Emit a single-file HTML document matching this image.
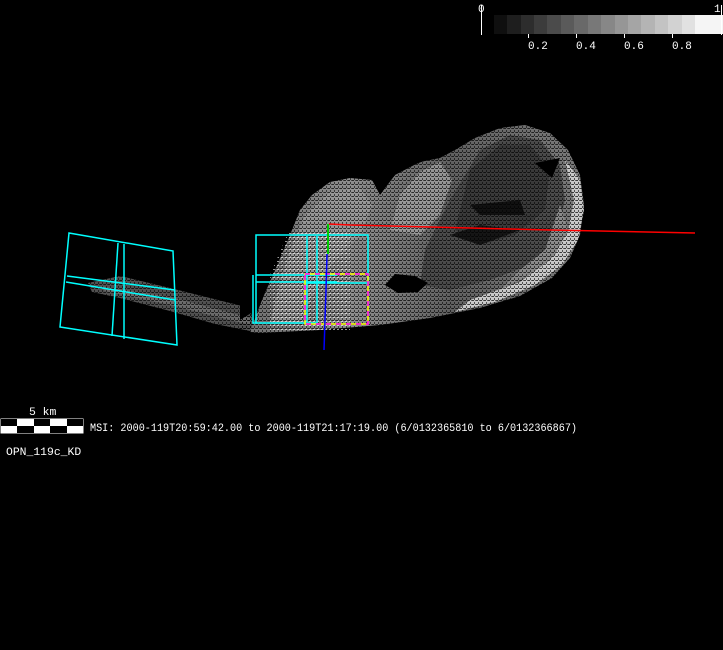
<!DOCTYPE html>
<html><head><meta charset="utf-8"><style>
html,body{margin:0;padding:0;background:#000;width:723px;height:650px;overflow:hidden}
svg{display:block}
text{font-family:"Liberation Mono",monospace;fill:#fff}
</style></head><body>
<svg width="723" height="650" viewBox="0 0 723 650" xmlns="http://www.w3.org/2000/svg">
<defs>
<pattern id="dots" width="4" height="4" patternUnits="userSpaceOnUse">
<rect x="0" y="0" width="2" height="1" fill="#000" opacity="0.7"/><rect x="2" y="2" width="1" height="2" fill="#000" opacity="0.6"/><rect x="3" y="0" width="1" height="1" fill="#000" opacity="0.5"/>
</pattern>
<pattern id="wdots" width="4" height="4" patternUnits="userSpaceOnUse">
<rect x="1" y="1" width="2" height="1" fill="#fff" opacity="0.6"/>
</pattern>
<linearGradient id="lg" x1="0" y1="0" x2="1" y2="0">
<stop offset="0" stop-color="#707070"/><stop offset="0.3" stop-color="#8e8e8e"/><stop offset="0.6" stop-color="#606060"/><stop offset="1" stop-color="#7a7a7a"/>
</linearGradient>
</defs>
<!-- tail -->
<polygon points="88,283 120,276 170,288 210,298 250,308 255,332 215,324 170,311 120,298 92,292" fill="#505050"/>
<polygon points="100,286 170,297 250,318 250,325 170,305 105,291" fill="#6a6a6a"/>
<rect x="85" y="270" width="170" height="65" fill="url(#dots)"/>
<!-- main body -->
<polygon points="250,332 262,300 275,270 288,240 300,210 312,195 330,182 350,178 372,180 380,195 395,175 420,162 440,158 455,150 475,138 500,128 525,125 550,133 568,150 580,175 584,205 580,235 570,258 552,278 520,296 480,308 430,318 380,325 320,330 260,333" fill="url(#lg)"/>
<polygon points="275,300 290,250 305,215 330,192 360,188 372,205 360,235 335,260 310,300 300,325 270,325" fill="#9a9a9a" opacity="0.8"/>
<polygon points="390,230 400,195 420,172 440,162 452,180 440,215 420,235" fill="#a0a0a0" opacity="0.8"/>
<polygon points="450,200 480,150 510,135 540,140 560,165 565,200 555,240 530,265 490,280 450,290 420,285 425,250" fill="#4a4a4a"/>
<polygon points="470,170 500,145 530,145 550,170 545,210 515,235 480,245 455,230" fill="#353535" opacity="0.8"/>
<polygon points="565,160 580,180 584,210 578,240 562,265 535,285 495,302 455,312 470,300 520,282 550,260 568,232 574,200" fill="#c8c8c8"/>
<polygon points="560,205 568,230 555,255 530,275 500,290 520,270 545,250" fill="#8a8a8a"/>
<polygon points="385,285 395,274 415,276 428,283 418,292 398,293" fill="#000"/>
<polygon points="535,163 560,158 552,178" fill="#000"/>
<polygon points="470,205 520,200 525,215 480,215" fill="#111"/>
<polygon points="450,235 480,225 520,230 480,245" fill="#151515"/>
<rect x="240" y="120" width="350" height="215" fill="url(#dots)"/>
<rect x="270" y="230" width="80" height="100" fill="url(#wdots)"/>
<polygon points="240,120 590,120 590,128 525,122 470,136 440,155 400,170 380,180 360,176 320,180 300,205 285,240 270,275 256,310 240,320" fill="#000"/>
<polyline points="329,224 350,225 390,226 430,227 470,228 510,229 550,230 600,231 695,233" fill="none" stroke="#f00" stroke-width="1.5"/>
<g stroke="#0ff" stroke-width="1.5" fill="none">
<polygon points="69,233 173,251 177,345 60,327"/>
<polyline points="67,276 175,290"/>
<polyline points="66,282 175,300"/>
<polyline points="118,243 112,336"/>
<polyline points="124,244 124,339"/>
<polyline points="256,323 256,235 368,235 368,283"/>
<polyline points="253,275 253,323 318,323"/>
<polyline points="256,275 337,275"/>
<polyline points="256,282 337,282"/>
<polyline points="307,236 307,322"/>
<polyline points="317,236 317,322"/>
<polyline points="304,283 368,283"/>
</g>
<rect x="305" y="274" width="63" height="50" fill="none" stroke="#ff0" stroke-width="1.5"/>
<rect x="305" y="274" width="63" height="50" fill="none" stroke="#f0f" stroke-width="1.5" stroke-dasharray="5 5"/>
<line x1="328" y1="224" x2="328" y2="254" stroke="#0c0" stroke-width="2"/>
<polyline points="327,254 326,290 324,350" fill="none" stroke="#00f" stroke-width="1.5"/>
<line x1="481.5" y1="5" x2="481.5" y2="35" stroke="#fff"/>
<text x="478" y="12" font-size="11">0</text>
<text x="714" y="12" font-size="11">1</text>
<g>
<rect x="494" y="15" width="14" height="19" fill="#0f0f0f"/>
<rect x="507" y="15" width="14" height="19" fill="#1e1e1e"/>
<rect x="521" y="15" width="14" height="19" fill="#2d2d2d"/>
<rect x="534" y="15" width="14" height="19" fill="#3c3c3c"/>
<rect x="547" y="15" width="14" height="19" fill="#4b4b4b"/>
<rect x="561" y="15" width="14" height="19" fill="#5a5a5a"/>
<rect x="574" y="15" width="14" height="19" fill="#696969"/>
<rect x="588" y="15" width="14" height="19" fill="#787878"/>
<rect x="601" y="15" width="14" height="19" fill="#878787"/>
<rect x="615" y="15" width="14" height="19" fill="#969696"/>
<rect x="628" y="15" width="14" height="19" fill="#a5a5a5"/>
<rect x="641" y="15" width="14" height="19" fill="#b4b4b4"/>
<rect x="655" y="15" width="14" height="19" fill="#c3c3c3"/>
<rect x="668" y="15" width="14" height="19" fill="#d2d2d2"/>
<rect x="682" y="15" width="14" height="19" fill="#e1e1e1"/>
<rect x="695" y="15" width="28" height="19" fill="#f5f5f5"/>
</g>
<line x1="721.5" y1="5" x2="721.5" y2="35" stroke="#fff"/>
<g stroke="#fff"><line x1="528.5" y1="34" x2="528.5" y2="38"/><line x1="576.5" y1="34" x2="576.5" y2="38"/><line x1="624.5" y1="34" x2="624.5" y2="38"/><line x1="672.5" y1="34" x2="672.5" y2="38"/></g>
<text x="528" y="49" font-size="11">0.2</text>
<text x="576" y="49" font-size="11">0.4</text>
<text x="624" y="49" font-size="11">0.6</text>
<text x="672" y="49" font-size="11">0.8</text>
<text x="29" y="415" font-size="11.4">5 km</text>
<rect x="0.5" y="418.5" width="83" height="15" fill="#fff"/>
<g fill="#000">
<rect x="1" y="419" width="16" height="7"/><rect x="34" y="419" width="16" height="7"/><rect x="67" y="419" width="16" height="7"/>
<rect x="17" y="426" width="17" height="7"/><rect x="50" y="426" width="17" height="7"/>
</g>
<text x="90" y="431" font-size="11.4" textLength="487" lengthAdjust="spacingAndGlyphs">MSI:  2000-119T20:59:42.00 to 2000-119T21:17:19.00 (6/0132365810 to 6/0132366867)</text>
<text x="6" y="455" font-size="11.4">OPN_119c_KD</text>
</svg>
</body></html>
